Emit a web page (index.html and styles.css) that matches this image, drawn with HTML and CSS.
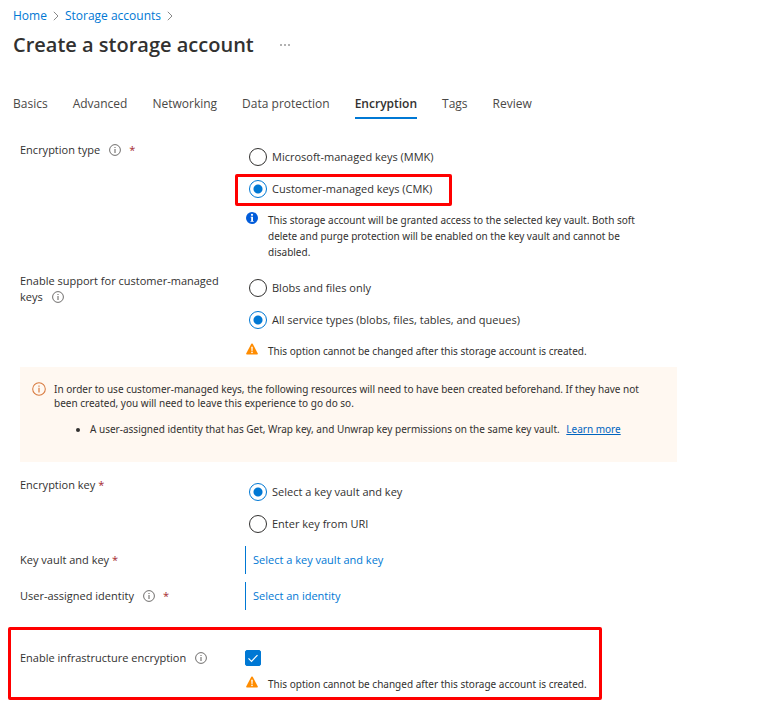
FILE: index.html
```html
<!DOCTYPE html>
<html lang="en">
<head>
    <meta charset="UTF-8">
    <meta name="viewport" content="width=device-width, initial-scale=1.0">
    <title>Create a storage account</title>
    <link rel="stylesheet" href="styles.css">
</head>
<body>
    <!-- shared icons -->
    <svg class="sprite" aria-hidden="true">
        <symbol id="icon-info" viewBox="0 0 12 12">
            <circle cx="6" cy="6" r="5.4" fill="none" stroke="currentColor" stroke-width="0.9"/>
            <path d="M6 5v4M6 3v1" stroke="currentColor" stroke-width="1"/>
        </symbol>
        <symbol id="icon-info-solid" viewBox="0 0 12 12">
            <circle cx="6" cy="6" r="6" fill="#015cda"/>
            <circle cx="6" cy="2.8" r="1.1" fill="#fff"/>
            <path d="M4.6 4.7H7V9h.7v.8H4.5V9h.7V5.5h-.6z" fill="#fff"/>
        </symbol>
        <symbol id="icon-warning" viewBox="0 0 12 12">
            <path d="M5.3.8Q6 0 6.7.8l5.1 9.6q.3 1.1-.7 1.1H.9q-1 0-.7-1.1z" fill="#ff8c00"/>
            <path d="M5.2 3.8h1.6L6.5 8h-1z" fill="#fff"/>
            <circle cx="6" cy="9.4" r="0.8" fill="#fff"/>
        </symbol>
        <symbol id="icon-chevron" viewBox="0 0 6 10">
            <path d="M.8.8L5 5 .8 9.2" fill="none" stroke="#7a7a7a" stroke-width="0.9"/>
        </symbol>
    </svg>

    <nav class="breadcrumb" aria-label="Breadcrumb">
        <a href="#">Home</a>
        <svg class="chevron"><use href="#icon-chevron"/></svg>
        <a href="#">Storage accounts</a>
        <svg class="chevron"><use href="#icon-chevron"/></svg>
    </nav>

    <header class="page-header">
        <h1>Create a storage account</h1>
        <button type="button" class="more" aria-label="More actions">
            <svg viewBox="0 0 10 2" width="10" height="2"><path d="M0 .5h2v1H0zM4 .5h2v1H4zM8 .5h2v1H8z" fill="#666"/></svg>
        </button>
    </header>

    <nav class="tabs" aria-label="Steps">
        <a href="#">Basics</a>
        <a href="#">Advanced</a>
        <a href="#">Networking</a>
        <a href="#">Data protection</a>
        <a href="#" class="active" aria-current="page">Encryption</a>
        <a href="#">Tags</a>
        <a href="#">Review</a>
    </nav>

    <form class="form">
        <div class="row" role="radiogroup" aria-labelledby="type-label">
            <div class="label"><span id="type-label">Encryption type</span><svg class="info"><use href="#icon-info"/></svg><span class="required">*</span></div>
            <div class="field">
                <label class="radio"><input type="radio" name="type">Microsoft-managed keys (MMK)</label>
                <label class="radio highlight"><input type="radio" name="type" checked>Customer-managed keys (CMK)</label>
                <p class="note"><svg class="note-icon"><use href="#icon-info-solid"/></svg><span>This storage account will be granted access to the selected key vault. Both soft delete and purge protection will be enabled on the key vault and cannot be disabled.</span></p>
            </div>
        </div>

        <div class="row" role="radiogroup" aria-labelledby="support-label">
            <div class="label"><span id="support-label">Enable support for customer-managed keys</span><svg class="info"><use href="#icon-info"/></svg></div>
            <div class="field">
                <label class="radio"><input type="radio" name="support">Blobs and files only</label>
                <label class="radio"><input type="radio" name="support" checked>All service types (blobs, files, tables, and queues)</label>
                <p class="note"><svg class="note-icon"><use href="#icon-warning"/></svg><span>This option cannot be changed after this storage account is created.</span></p>
            </div>
        </div>

        <div class="banner">
            <svg class="banner-icon"><use href="#icon-info"/></svg>
            <div class="banner-body">
                <p>In order to use customer-managed keys, the following resources will need to have been created beforehand. If they have not been created, you will need to leave this experience to go do so.</p>
                <ul>
                    <li>A user-assigned identity that has Get, Wrap key, and Unwrap key permissions on the same key vault. <a href="#">Learn more</a></li>
                </ul>
            </div>
        </div>

        <div class="row" role="radiogroup" aria-labelledby="key-label">
            <div class="label"><span id="key-label">Encryption key</span><span class="required tight">*</span></div>
            <div class="field">
                <label class="radio"><input type="radio" name="key" checked>Select a key vault and key</label>
                <label class="radio"><input type="radio" name="key">Enter key from URI</label>
            </div>
        </div>

        <div class="row picker">
            <div class="label">Key vault and key<span class="required tight">*</span></div>
            <div class="field"><a href="#">Select a key vault and key</a></div>
        </div>

        <div class="row picker">
            <div class="label">User-assigned identity<svg class="info"><use href="#icon-info"/></svg><span class="required">*</span></div>
            <div class="field"><a href="#">Select an identity</a></div>
        </div>

        <div class="row infra highlight">
            <div class="label"><label for="infra">Enable infrastructure encryption</label><svg class="info"><use href="#icon-info"/></svg></div>
            <div class="field">
                <div class="check">
                    <input type="checkbox" id="infra" checked>
                    <svg class="tick" viewBox="0 0 16 16"><path d="M3.5 8.3l3 3 6-6.2" fill="none" stroke="#fff" stroke-width="1.2"/></svg>
                </div>
                <p class="note"><svg class="note-icon"><use href="#icon-warning"/></svg><span>This option cannot be changed after this storage account is created.</span></p>
            </div>
        </div>
    </form>
</body>
</html>
```
FILE: styles.css
```css
*, *::after {
    box-sizing: border-box;
}
body {
    margin: 0;
    padding: 8px 13px 0;
    font-family: "Open Sans", "Noto Sans", sans-serif;
    font-size: 12px;
    line-height: 16px;
    color: #323130;
    background-color: #fff;
}
a {
    color: #0078d4;
    text-decoration: none;
}
p, h1, ul {
    margin: 0;
}
.sprite {
    position: absolute;
    width: 0;
    height: 0;
}
.breadcrumb {
    display: flex;
    align-items: center;
    gap: 6px;
}
.chevron {
    width: 6px;
    height: 10px;
}
.page-header {
    display: flex;
    align-items: center;
    gap: 26px;
    padding-top: 7px;
}
.page-header h1 {
    font-size: 20px;
    line-height: 28px;
    font-weight: 600;
}
.more {
    display: flex;
    padding: 4px 0;
    border: 0;
    background: none;
}
.tabs {
    display: flex;
    gap: 25px;
    padding-top: 31px;
}
.tabs a {
    padding: 4px 0 3px;
    border-bottom: 2px solid transparent;
    line-height: 20px;
    color: #4a4846;
}
.tabs .active {
    font-weight: 600;
    color: #323130;
    border-color: #0078d4;
}
.form {
    padding: 23px 0 0 7px;
    font-size: 11px;
}
.row {
    display: grid;
    grid-template-columns: 225px minmax(0, 400px);
    align-items: start;
    margin-bottom: 13px;
}
.label {
    padding-right: 20px;
}
.info {
    width: 12px;
    height: 12px;
    margin-left: 9px;
    vertical-align: -2px;
    color: #605e5c;
}
.required {
    margin-left: 8px;
    color: #a4262c;
}
.tight {
    margin-left: 3px;
}
.field {
    padding-top: 6px;
}
.radio {
    position: relative;
    display: flex;
    align-items: center;
    gap: 5px;
    width: max-content;
    height: 18px;
    margin: 0 0 14px 4px;
}
.radio:last-child {
    margin-bottom: 0;
}
.radio input {
    flex: none;
    width: 18px;
    height: 18px;
    margin: 0;
    appearance: none;
    border: 1px solid #323130;
    border-radius: 50%;
}
.radio input:checked {
    border-color: #0078d4;
    background: radial-gradient(circle, #0078d4 4px, transparent 5px);
}
.note {
    display: flex;
    gap: 10px;
    font-family: "Noto Sans", sans-serif;
    font-size: 10px;
}
.note-icon {
    flex: none;
    width: 12px;
    height: 12px;
    margin: 0 0 0 1px;
}
/* red callout frames */
.highlight::after {
    content: "";
    position: absolute;
    inset: -6px -20px -8px -14px;
    border: 3px solid #f00;
    border-radius: 2px;
    pointer-events: none;
}
.banner {
    display: flex;
    gap: 8px;
    max-width: 657px;
    min-height: 95px;
    margin: -5px 0 15px;
    padding: 15px 20px 16px 12px;
    font-family: "Noto Sans", sans-serif;
    font-size: 10px;
    line-height: 14px;
    background-color: #fff8f1;
}
.banner-icon {
    flex: none;
    width: 14px;
    height: 14px;
    color: #d87a3f;
}
.banner ul {
    margin-top: 12px;
    padding-left: 36px;
}
.banner a {
    margin-left: 4px;
    color: #0064bf;
    text-decoration: underline;
}
.picker {
    align-items: center;
    margin-bottom: 8px;
}
.picker .field {
    padding: 6px 0 6px 7px;
    border-left: 1px solid #0078d4;
}
.infra {
    position: relative;
    margin-top: 40px;
}
.infra .field {
    padding-top: 0;
}
.check {
    position: relative;
    width: 16px;
    height: 16px;
    margin-bottom: 10px;
}
.check input {
    display: block;
    width: 16px;
    height: 16px;
    margin: 0;
    appearance: none;
    border: 1px solid #0078d4;
    border-radius: 2px;
}
.check input:checked {
    background-color: #0078d4;
}
.tick {
    position: absolute;
    inset: 0;
    pointer-events: none;
}
.infra.highlight::after {
    inset: -23px auto -8px -12px;
    width: 594px;
}
```
